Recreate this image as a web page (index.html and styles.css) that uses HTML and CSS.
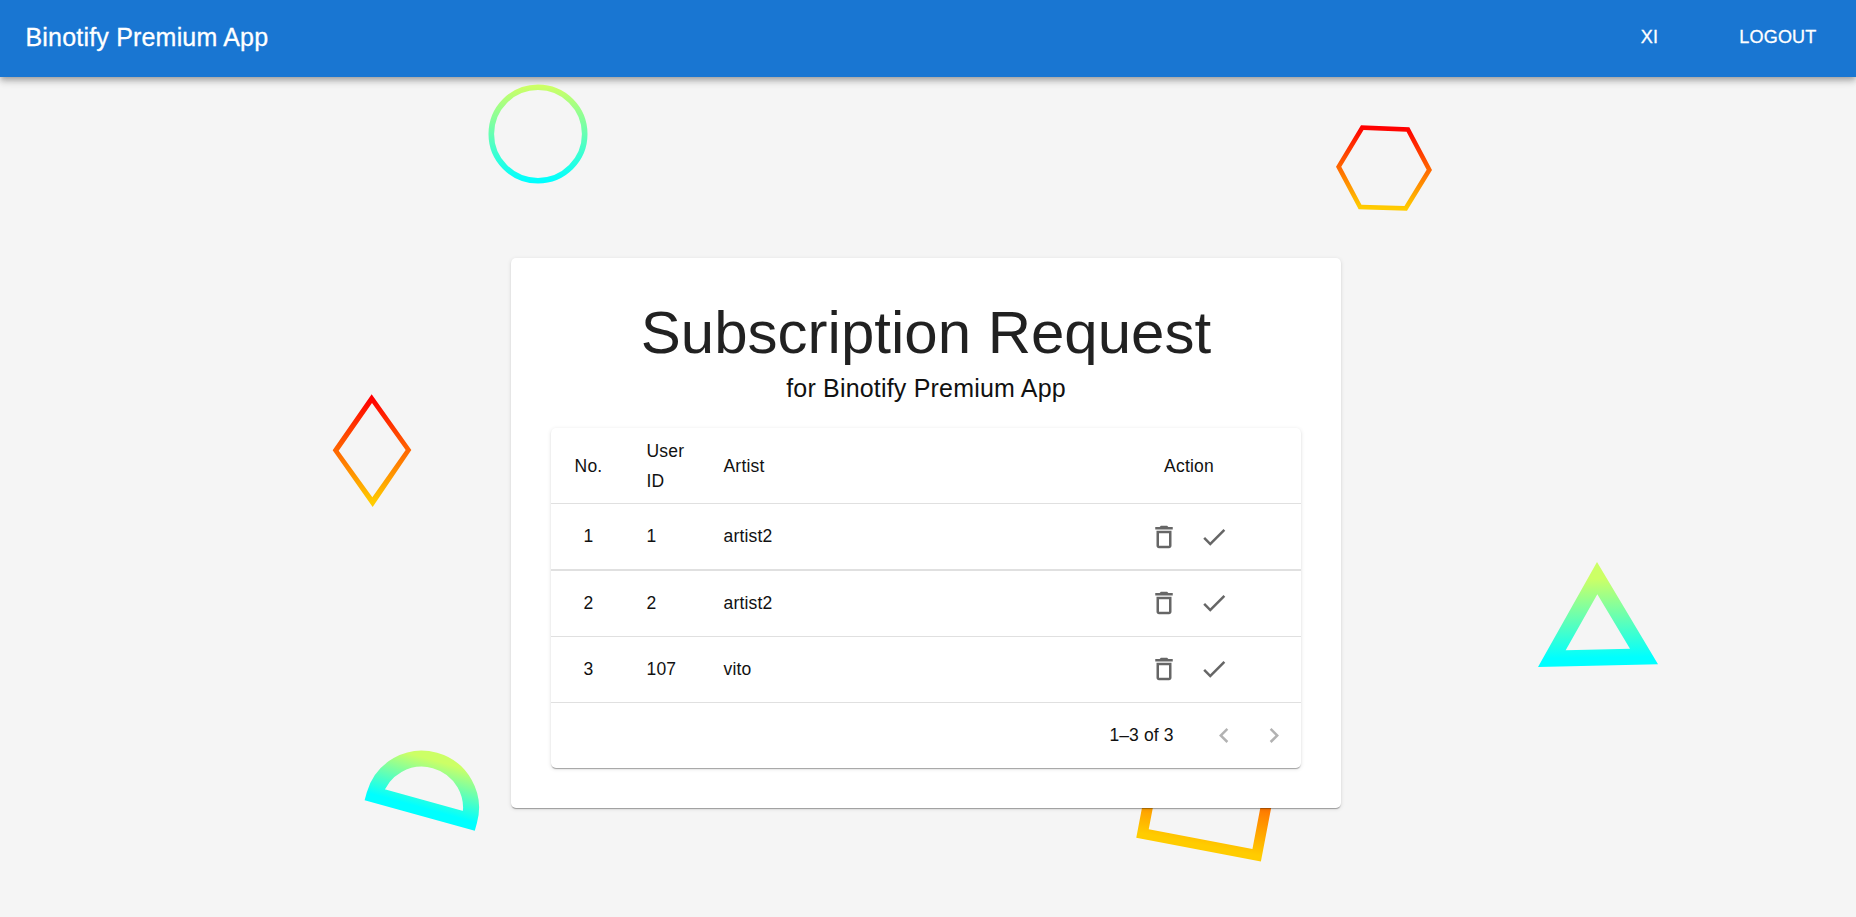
FILE: index.html
```
<!DOCTYPE html>
<html lang="en">
<head>
<meta charset="utf-8">
<title>Binotify Premium App</title>
<link rel="stylesheet" href="styles.css">
</head>
<body>
<svg class="defs" width="0" height="0" aria-hidden="true">
  <defs>
    <symbol id="trash" viewBox="0 0 24 24"><path d="M6 19c0 1.1.9 2 2 2h8c1.1 0 2-.9 2-2V7H6v12zM8 9h8v10H8V9zm7.500-5-1-1h-5l-1 1H5v2h14V4z"/></symbol>
    <symbol id="check" viewBox="0 0 24 24"><path d="M9 16.170 4.830 12l-1.420 1.410L9 19 21 7l-1.410-1.410z"/></symbol>
    <symbol id="left" viewBox="0 0 24 24"><path d="M15.410 16.090l-4.580-4.590 4.580-4.590L14 5.500l-6 6 6 6z"/></symbol>
    <symbol id="right" viewBox="0 0 24 24"><path d="M8.590 16.090l4.580-4.590-4.580-4.590L10 5.500l6 6-6 6z"/></symbol>
  </defs>
</svg>

<header class="appbar">
  <div class="brand">Binotify Premium App</div>
  <nav class="nav"><a>XI</a><a>LOGOUT</a></nav>
</header>

<div class="shapes" aria-hidden="true">
  <svg class="shape circle" viewBox="0 0 100 100">
    <linearGradient id="g1" gradientUnits="userSpaceOnUse" x1="0" y1="3" x2="0" y2="97"><stop offset="0" stop-color="#cf6"/><stop offset="1" stop-color="#0ff"/></linearGradient>
    <circle cx="50" cy="50" r="46.700" fill="none" stroke="url(#g1)" stroke-width="5.600"/>
  </svg>
  <svg class="shape hexagon" viewBox="0 0 390 330">
    <linearGradient id="g2" gradientUnits="userSpaceOnUse" x1="195" y1="54" x2="189" y2="294"><stop offset="0" stop-color="#f00"/><stop offset="1" stop-color="#fc0"/></linearGradient>
    <path fill="url(#g2)" fill-rule="evenodd" d="M123 46 268 52 336 180 261 302 116 298 48 170zM130.600 60 63.800 170.400 124.400 284.400 253.400 288 320 179.300 259.600 65.400z"/>
  </svg>
  <svg class="shape diamond" viewBox="0 0 330 420">
    <linearGradient id="g3" gradientUnits="userSpaceOnUse" x1="0" y1="56" x2="0" y2="367"><stop offset="0" stop-color="#f00"/><stop offset="1" stop-color="#fc0"/></linearGradient>
    <path fill="url(#g3)" fill-rule="evenodd" d="M155 43 274 210 158 381 38 211zM156 69 56 212 157 352 257 210z"/>
  </svg>
  <svg class="shape half" viewBox="0 0 420 300">
    <linearGradient id="g4" gradientUnits="userSpaceOnUse" x1="0" y1="-147.500" x2="0" y2="0"><stop offset="0" stop-color="#cf6"/><stop offset="1" stop-color="#0ff"/></linearGradient>
    <path transform="translate(215.500 203.500) rotate(15.500)" fill="none" stroke="url(#g4)" stroke-width="48" d="M-147.500 0A147.500 147.500 0 0 1 147.500 0z"/>
  </svg>
  <svg class="shape square" viewBox="0 0 510 240">
    <linearGradient id="g5" gradientUnits="userSpaceOnUse" x1="304" y1="-179" x2="238.500" y2="163.500"><stop offset="0" stop-color="#f00"/><stop offset="1" stop-color="#fc0"/></linearGradient>
    <path fill="none" stroke="url(#g5)" stroke-width="32" d="M67.500 130.500 410 196 475.500-146.500 133-212z"/>
  </svg>
  <svg class="shape triangle" viewBox="0 0 450 390">
    <linearGradient id="g6" gradientUnits="userSpaceOnUse" x1="228" y1="86" x2="232" y2="323"><stop offset="0" stop-color="#cf6"/><stop offset="1" stop-color="#0ff"/></linearGradient>
    <path fill="url(#g6)" fill-rule="evenodd" d="M231 36 414 343 54 351zM232 133 137 301 330 296z"/>
  </svg>
</div>

<main class="card">
  <h1>Subscription Request</h1>
  <h2>for Binotify Premium App</h2>
  <section class="panel">
    <div class="row head"><span class="no">No.</span><span class="uid">User ID</span><span>Artist</span><span class="actions">Action</span></div>
    <div class="row first"><span class="no">1</span><span class="uid">1</span><span>artist2</span><span class="actions"><svg class="icon"><use href="#trash"/></svg><svg class="icon"><use href="#check"/></svg></span></div>
    <div class="row"><span class="no">2</span><span class="uid">2</span><span>artist2</span><span class="actions"><svg class="icon"><use href="#trash"/></svg><svg class="icon"><use href="#check"/></svg></span></div>
    <div class="row"><span class="no">3</span><span class="uid">107</span><span>vito</span><span class="actions"><svg class="icon"><use href="#trash"/></svg><svg class="icon"><use href="#check"/></svg></span></div>
    <div class="pager"><span class="range">1–3 of 3</span><svg class="icon off"><use href="#left"/></svg><svg class="icon off"><use href="#right"/></svg></div>
  </section>
</main>
</body>
</html>
```
FILE: styles.css
```
* { box-sizing: border-box; }
body {
  margin: 0;
  height: 917px;
  overflow: hidden;
  background: #f5f5f5;
  color: rgba(0, 0, 0, .87);
  font-family: "Liberation Sans", Arial, sans-serif;
}
.defs { position: absolute; }

.appbar {
  position: relative;
  display: flex;
  align-items: center;
  justify-content: space-between;
  height: 77px;
  padding: 0 39.5px 0 25.5px;
  background: #1976d2;
  color: #fff;
  box-shadow: 0 2.5px 5px -1px rgba(0, 0, 0, .2), 0 5px 6px rgba(0, 0, 0, .14), 0 1px 12px rgba(0, 0, 0, .12);
}
.brand { font-size: 25px; line-height: 40px; letter-spacing: .19px; -webkit-text-stroke: .3px #fff; padding-bottom: 4px; }
.nav { display: flex; gap: 81px; padding-bottom: 3px; font-size: 18px; line-height: 30px; letter-spacing: .2px; -webkit-text-stroke: .3px #fff; }

.shape { position: absolute; overflow: visible; }
.circle { left: 488.2px; top: 84.2px; width: 100px; height: 100px; }
.hexagon { left: 1320px; top: 110px; width: 130px; height: 110px; }
.diamond { left: 320px; top: 380px; width: 110px; height: 140px; }
.half { left: 350px; top: 740px; width: 140px; height: 100px; }
.square { left: 1120px; top: 790px; width: 170px; height: 80px; }
.triangle { left: 1520px; top: 550px; width: 150px; height: 130px; }

.card, .panel {
  background: #fff;
  border-radius: 5px;
  box-shadow: 0 2px 1px -1px rgba(0, 0, 0, .2), 0 1px 1px rgba(0, 0, 0, .14), 0 1px 4px rgba(0, 0, 0, .12);
}
.card {
  position: relative;
  width: 830px;
  height: 550px;
  margin: 181px 0 0 511px;
  padding: 40px;
}
h1, h2 { margin: 0; font-weight: 400; text-align: center; }
h1 { font-size: 60px; line-height: 70px; }
h2 { margin-bottom: 20px; font-size: 25px; line-height: 40px; letter-spacing: .19px; color: #111; }

.panel { height: 340px; font-size: 17.5px; line-height: 30px; letter-spacing: .19px; color: #111; }
.row {
  display: grid;
  grid-template-columns: 75px 77.500px 1fr 224px;
  align-items: center;
  height: 66px;
  padding-bottom: 1px;
  border-bottom: 1px solid #e0e0e0;
}
.head { height: 76px; padding-bottom: 0; }
.first { height: 67px; border-bottom-width: 2px; }
.row > span { padding: 0 20px; }
.row > .uid { padding-left: 20.500px; }
.row > .no { padding: 0; text-align: center; }
.row > .actions { display: flex; justify-content: center; gap: 20px; padding: 0; }
.icon { width: 30px; height: 30px; fill: rgba(0, 0, 0, .6); }
.first .icon { position: relative; top: .5px; }
.pager { display: flex; align-items: center; justify-content: flex-end; gap: 20px; height: 65px; padding-right: 12.500px; }
.range { margin-right: 15px; padding-bottom: 2px; letter-spacing: .1px; }
.off { fill: rgba(0, 0, 0, .3); }
```
